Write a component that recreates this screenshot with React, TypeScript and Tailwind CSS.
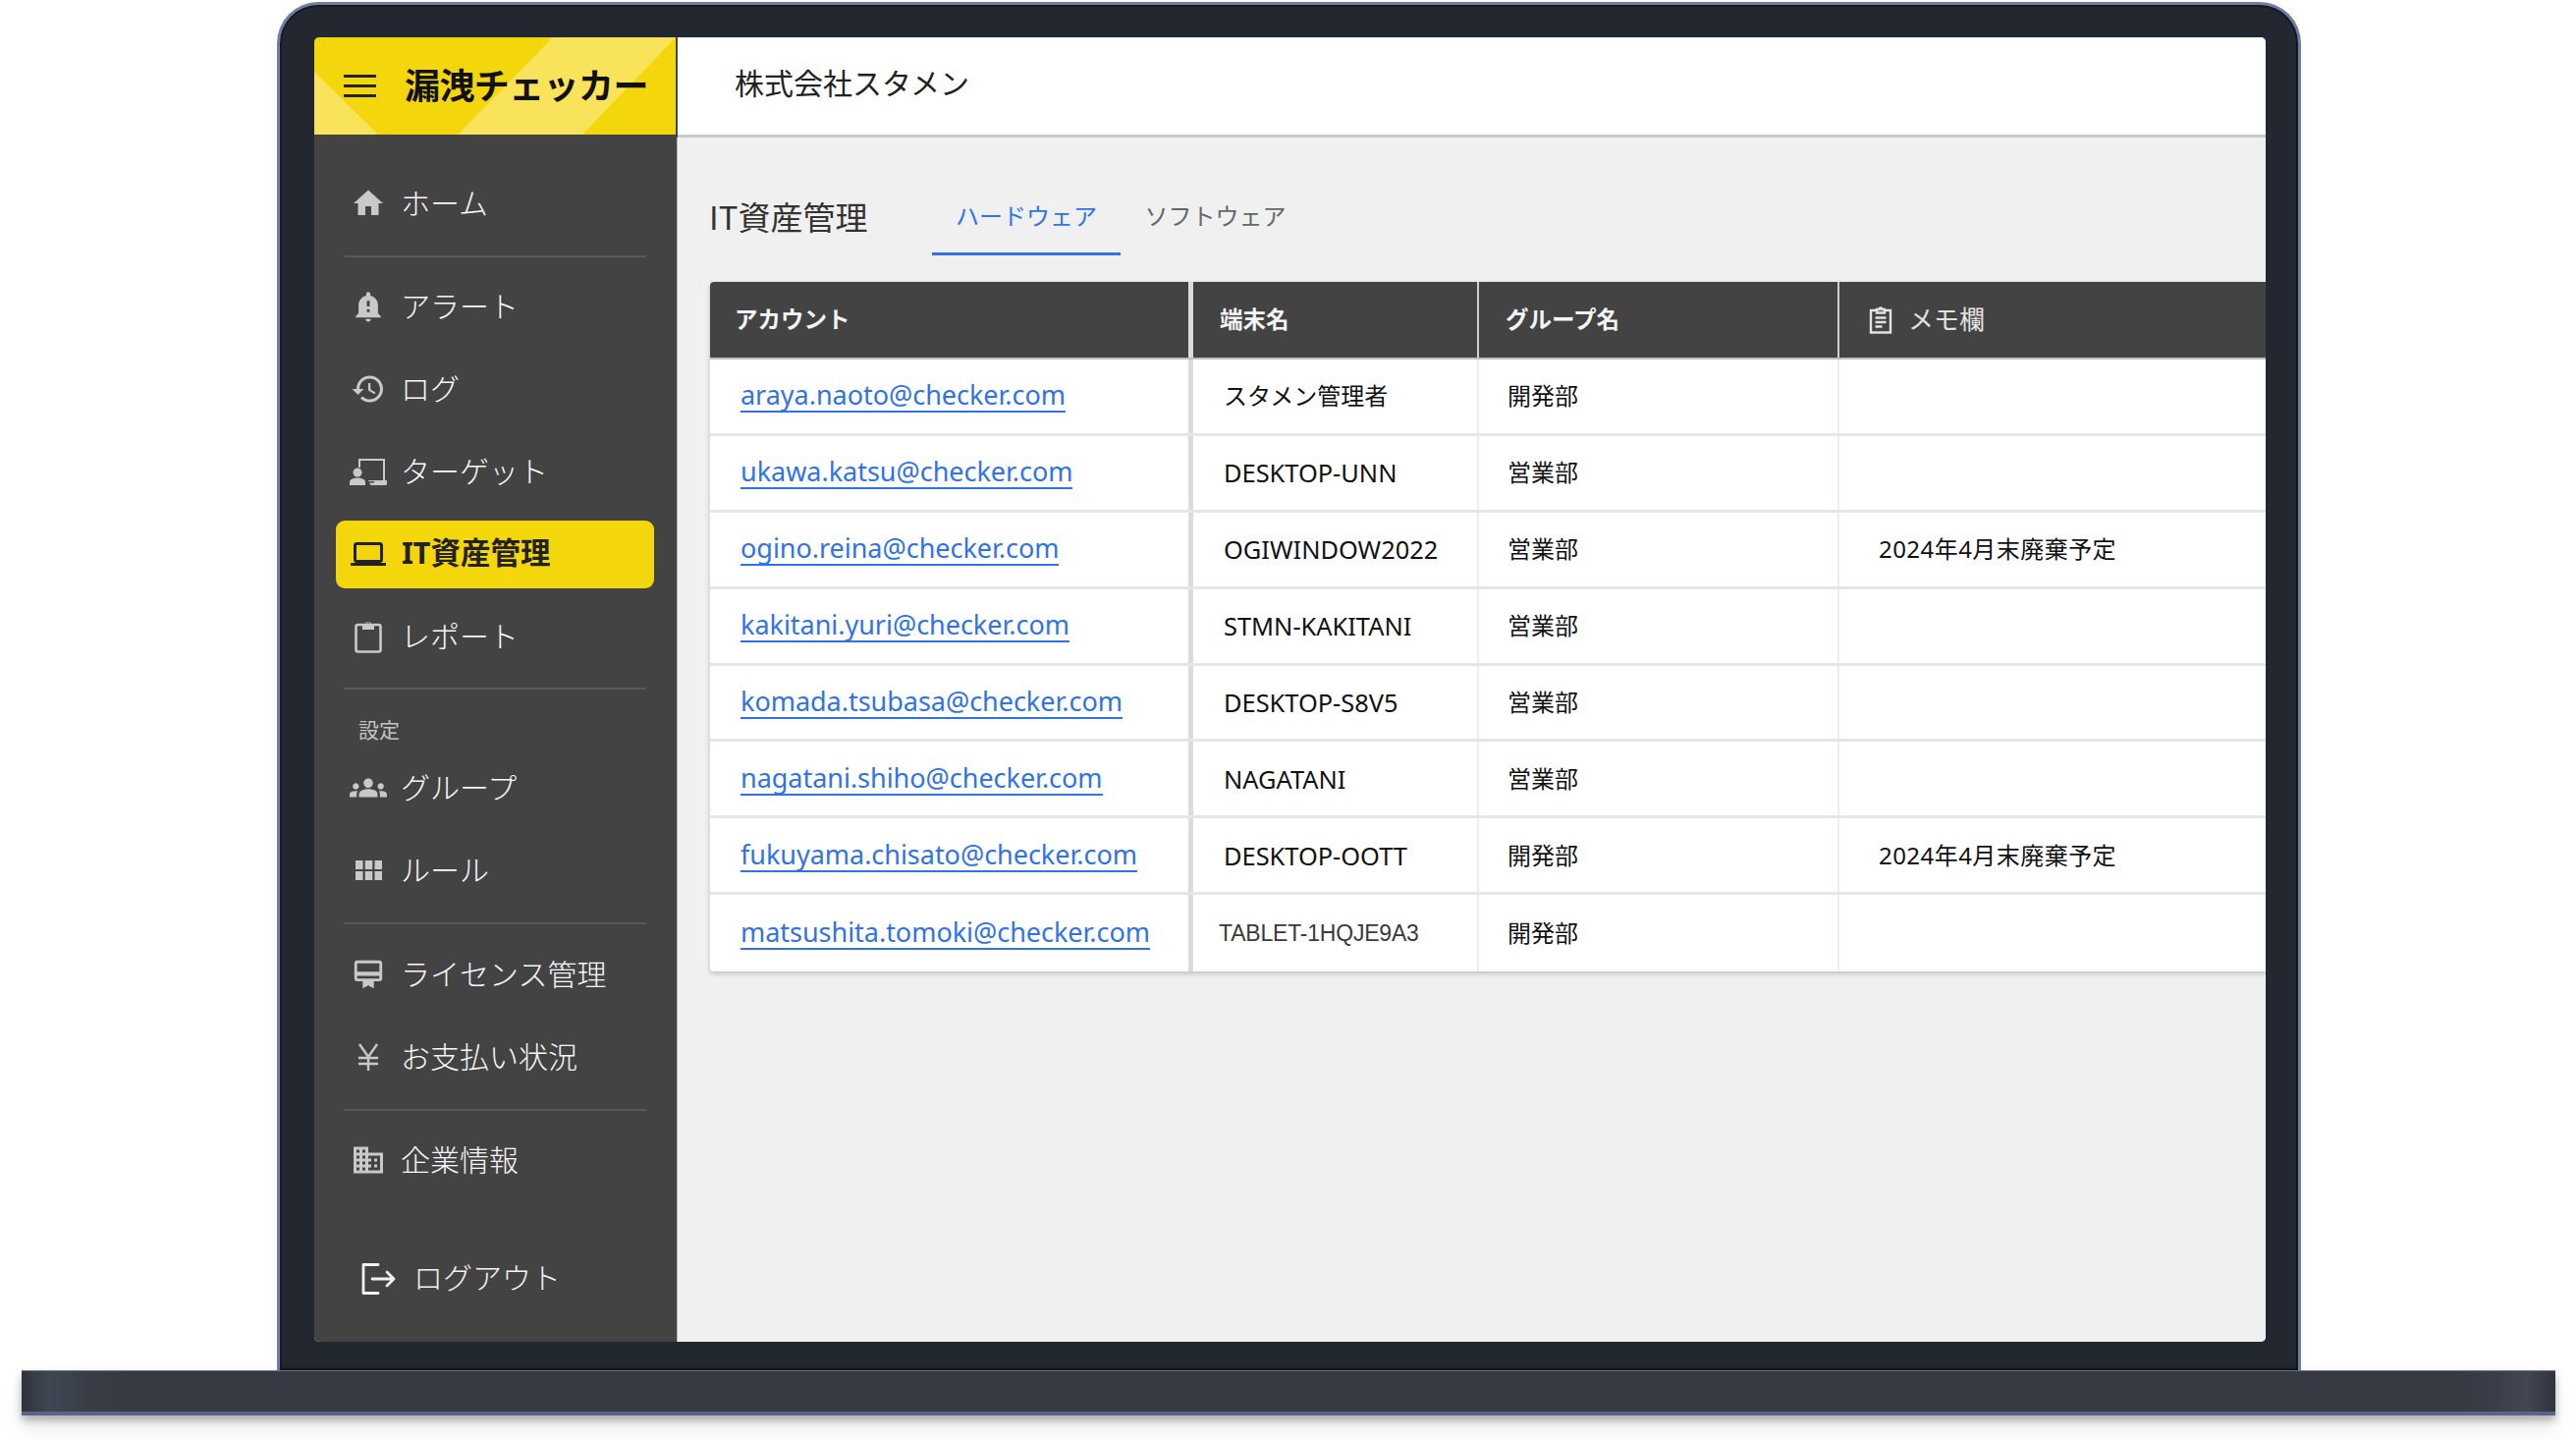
import type { ReactNode } from "react";

const rows = [
  { mail: "araya.naoto@checker.com", host: "スタメン管理者", group: "開発部", memo: "" },
  { mail: "ukawa.katsu@checker.com", host: "DESKTOP-UNN", group: "営業部", memo: "" },
  { mail: "ogino.reina@checker.com", host: "OGIWINDOW2022", group: "営業部", memo: "2024年4月末廃棄予定" },
  { mail: "kakitani.yuri@checker.com", host: "STMN-KAKITANI", group: "営業部", memo: "" },
  { mail: "komada.tsubasa@checker.com", host: "DESKTOP-S8V5", group: "営業部", memo: "" },
  { mail: "nagatani.shiho@checker.com", host: "NAGATANI", group: "営業部", memo: "" },
  { mail: "fukuyama.chisato@checker.com", host: "DESKTOP-OOTT", group: "開発部", memo: "2024年4月末廃棄予定" },
  { mail: "matsushita.tomoki@checker.com", host: "TABLET-1HQJE9A3", group: "開発部", memo: "" },
];

function Mui({ d, size = 36 }: { d: string; size?: number }) {
  return (
    <svg width={size} height={size} viewBox="0 0 24 24" fill="currentColor">
      <path d={d} />
    </svg>
  );
}

const HomeIcon = <Mui d="M10 20v-6h4v6h5v-8h3L12 3 2 12h3v8z" />;
const BellIcon = (
  <Mui
    size={34}
    d="M12 23c1.1 0 1.99-.89 1.99-1.99h-3.98c0 1.1.89 1.99 1.99 1.99zm7-6v-6c0-3.35-2.36-6.15-5.5-6.83V3c0-.83-.67-1.5-1.5-1.5s-1.5.67-1.5 1.5v1.17C7.36 4.85 5 7.65 5 11v6l-2 2v1h18v-1l-2-2zm-6-1h-2v-2h2v2zm0-4h-2V8h2v4z"
  />
);
const HistoryIcon = (
  <Mui d="M13 3c-4.97 0-9 4.03-9 9H1l3.89 3.89.07.14L9 12H6c0-3.87 3.13-7 7-7s7 3.13 7 7-3.13 7-7 7c-1.93 0-3.68-.79-4.94-2.06l-1.42 1.42C8.27 19.99 10.51 21 13 21c4.97 0 9-4.03 9-9s-4.03-9-9-9zm-1 5v5l4.28 2.54.72-1.21-3.5-2.08V8H12z" />
);
const LaptopIcon = (
  <Mui d="M20 18c1.1 0 1.99-.9 1.99-2L22 6c0-1.1-.9-2-2-2H4c-1.1 0-2 .9-2 2v10c0 1.1.9 2 2 2H0v2h24v-2h-4zM4 6h16v10H4V6z" />
);
const GroupsIcon = (
  <Mui
    size={38}
    d="M12 12.75c1.63 0 3.07.39 4.24.9 1.08.48 1.76 1.56 1.76 2.73V18H6v-1.61c0-1.18.68-2.26 1.76-2.73 1.17-.52 2.61-.91 4.24-.91zM4 13c1.1 0 2-.9 2-2s-.9-2-2-2-2 .9-2 2 .9 2 2 2zm1.13 1.1c-.37-.06-.74-.1-1.13-.1-.99 0-1.93.21-2.78.58C.48 14.9 0 15.62 0 16.43V18h4.5v-1.61c0-.83.23-1.61.63-2.29zM20 13c1.1 0 2-.9 2-2s-.9-2-2-2-2 .9-2 2 .9 2 2 2zm4 3.43c0-.81-.48-1.53-1.22-1.85-.85-.37-1.79-.58-2.78-.58-.39 0-.76.04-1.13.1.4.68.63 1.46.63 2.29V18H24v-1.57zM12 6c1.66 0 3 1.34 3 3s-1.34 3-3 3-3-1.34-3-3 1.34-3 3-3z"
  />
);
const MembershipIcon = (
  <Mui
    size={34}
    d="M20 2H4c-1.11 0-2 .89-2 2v11c0 1.11.89 2 2 2h4v5l4-2 4 2v-5h4c1.11 0 2-.89 2-2V4c0-1.11-.89-2-2-2zm0 13H4v-2h16v2zm0-5H4V4h16v6z"
  />
);
const BusinessIcon = (
  <Mui d="M12 7V3H2v18h20V7H12zM6 19H4v-2h2v2zm0-4H4v-2h2v2zm0-4H4V9h2v2zm0-4H4V5h2v2zm4 12H8v-2h2v2zm0-4H8v-2h2v2zm0-4H8V9h2v2zm0-4H8V5h2v2zm10 12h-8v-2h2v-2h-2v-2h2v-2h-2V9h8v10zm-2-8h-2v2h2v-2zm0 4h-2v2h2v-2z" />
);

function ReportIcon() {
  return (
    <svg width="28" height="34" viewBox="0 0 28 34" fill="currentColor">
      <rect x="1.500" y="5" width="25" height="27.500" rx="2" fill="none" stroke="currentColor" strokeWidth="2.600" />
      <path
        fillRule="evenodd"
        d="M8 4h3.200a3 3 0 0 1 5.600 0H20v6H8zM14 2.500a1.300 1.300 0 1 0 0 2.600 1.300 1.300 0 0 0 0-2.600z"
      />
    </svg>
  );
}

function TargetIcon() {
  return (
    <svg width="38" height="30" viewBox="0 0 38 30" fill="currentColor">
      <path d="M9 2h27v22h-2V4H11v7H9z" />
      <path d="M19 24h19v3.500c0 .8-.6 1.500-1.500 1.500H21.500z" />
      <circle cx="8" cy="16" r="4.500" />
      <path d="M0 29v-3c0-3 3.500-4.500 8-4.500s8 1.500 8 4.500v3z" />
      <path d="M18 25h7v1.500h-7z" fill="#434343" />
    </svg>
  );
}

function AppsIcon() {
  return (
    <svg width="27" height="20" viewBox="0 0 27 20" fill="currentColor">
      <path d="M0 0h7.500v9H0zM9.750 0h7.500v9h-7.500zM19.500 0H27v9h-7.500zM0 11h7.500v9H0zM9.750 11h7.500v9h-7.500zM19.500 11H27v9h-7.500z" />
    </svg>
  );
}

function YenIcon() {
  return (
    <svg width="22" height="28" viewBox="0 0 22 28" fill="none" stroke="currentColor" strokeWidth="2.400">
      <path d="M2 1l9 13 9-13M11 14v14M1 15h20M1 21h20" />
    </svg>
  );
}

function LogoutIcon() {
  return (
    <svg width="36" height="32" viewBox="0 0 36 32" fill="none" stroke="currentColor" strokeWidth="2.800" strokeLinejoin="round" strokeLinecap="round">
      <path d="M17 1.500H2v29h15M11 16h22M26 9l7 7-7 7" />
    </svg>
  );
}

function MemoIcon() {
  return (
    <svg width="24" height="28" viewBox="0 0 24 28" fill="none" stroke="currentColor" strokeWidth="2.400">
      <path d="M8 4H2v22.500h20V4h-6" />
      <path d="M8 6.500V3h2.500a1.500 1.500 0 0 1 3 0H16v3.500zM6.500 11.500h11M6.500 16h11M6.500 20.500h7" />
    </svg>
  );
}

function NavItem({ icon, label, active }: { icon: ReactNode; label: string; active?: boolean }) {
  return (
    <li className="flex h-[84px] items-center pl-[22px] pr-[23px]">
      <a
        className={
          active
            ? "flex h-[69px] w-full items-center rounded-[9px] bg-[#f4d60c] text-[30.5px] font-bold text-[#222222]"
            : "flex h-[69px] w-full items-center text-[30px] font-light text-[#f7f7f7]"
        }
      >
        <span
          className={
            active
              ? "ml-[14px] mr-[15px] flex w-[38px] justify-center text-[#222222]"
              : "ml-[14px] mr-[14px] flex w-[38px] justify-center text-[#c9c9c9]"
          }
        >
          {icon}
        </span>
        <span className={active ? "mb-[3px]" : "mb-[1px]"}>{label}</span>
      </a>
    </li>
  );
}

function Divider({ className }: { className: string }) {
  return <div className={"ml-[30px] mr-[31px] h-[2px] bg-[#585858] " + className} />;
}

function Sidebar() {
  return (
    <aside className="flex w-[370px] shrink-0 flex-col border-r border-[#b5b5b5] bg-[#434343] pt-[25px]">
      <ul>
        <NavItem icon={HomeIcon} label="ホーム" />
      </ul>
      <Divider className="mt-[11px]" />
      <ul className="mt-[8px]">
        <NavItem icon={BellIcon} label="アラート" />
        <NavItem icon={HistoryIcon} label="ログ" />
        <NavItem icon={<TargetIcon />} label="ターゲット" />
        <NavItem icon={LaptopIcon} label="IT資産管理" active />
        <NavItem icon={<ReportIcon />} label="レポート" />
      </ul>
      <Divider className="mt-[10px]" />
      <div className="ml-[45px] mt-[26px] h-[30px] text-[21px] leading-[30px] text-[#c4c4c4]">設定</div>
      <ul className="mt-[2px]">
        <NavItem icon={GroupsIcon} label="グループ" />
        <NavItem icon={<AppsIcon />} label="ルール" />
      </ul>
      <Divider className="mt-[11px]" />
      <ul className="mt-[9px]">
        <NavItem icon={MembershipIcon} label="ライセンス管理" />
        <NavItem icon={<YenIcon />} label="お支払い状況" />
      </ul>
      <Divider className="mt-[11px]" />
      <ul className="mt-[8px]">
        <NavItem icon={BusinessIcon} label="企業情報" />
      </ul>
      <div className="ml-[48px] mt-[55px] flex items-center gap-[17px] text-[30px] font-light text-[#f2f2f2]">
        <LogoutIcon />
        <span className="mb-[3px]">ログアウト</span>
      </div>
    </aside>
  );
}

function Logo() {
  return (
    <div className="h-[102px] w-[370px] shrink-0 bg-[#434343]">
      <div className="relative flex h-[99px] w-[368px] items-center overflow-hidden bg-[#f4d60c] pl-[30px]">
        <svg className="absolute left-0 top-0" width="368" height="99" viewBox="0 0 368 99" fill="#f9e35a">
          <path d="M0 35l65 64H0zM243 0h125l-95 99H146z" />
        </svg>
        <span className="relative mr-[29px] flex w-[33px] flex-col gap-[7px]">
          <i className="block h-[3px] bg-[#222222]" />
          <i className="block h-[3px] bg-[#222222]" />
          <i className="block h-[3px] bg-[#222222]" />
        </span>
        <span className="relative text-[36px] font-bold tracking-[-0.6px] text-[#111111]">漏洩チェッカー</span>
      </div>
    </div>
  );
}

const gridCols = "grid grid-cols-[492px_291px_367px_1fr]";

function AssetTable() {
  return (
    <div className="mt-[27px] overflow-hidden rounded-l-[4px] bg-white shadow-[0_2px_5px_rgba(0,0,0,0.22)]">
      <div className={gridCols + " h-[79px] border-b-[2px] border-[#bdbdbd] bg-[#434343] text-[23.5px] font-bold text-[#f4f4f4]"}>
        <div className="flex items-center border-r-[5px] border-[#dcdcdc] pl-[25px]">アカウント</div>
        <div className="flex items-center border-r-2 border-[#cfcfcf] pl-[27px]">端末名</div>
        <div className="flex items-center border-r-2 border-[#cfcfcf] pl-[27px]">グループ名</div>
        <div className="flex items-center gap-[16px] pl-[30px] text-[26px] font-normal text-[#e2e2e2]">
          <MemoIcon />
          メモ欄
        </div>
      </div>
      {rows.map((r, i) => (
        <div
          key={r.mail}
          className={
            gridCols +
            " h-[77.9px] text-[24px] text-[#111111] " +
            (i < rows.length - 1 ? "border-b-[3px] border-[#e6e6e6]" : "")
          }
        >
          <div className="flex items-center border-r-[5px] border-[#dcdcdc] pl-[31px]">
            <a className="border-b-2 border-[#2f73e6] text-[27px] leading-[32px] tracking-[-0.03px] text-[#2f73e6]">{r.mail}</a>
          </div>
          {r.host.startsWith("TABLET") ? (
            <div className="flex items-center border-r-2 border-[#ececec] pl-[26px] font-['Liberation_Sans',sans-serif] text-[23px] tracking-[-0.2px] text-[#3a3a3a]">
              {r.host}
            </div>
          ) : r.host.startsWith("スタメン") ? (
            <div className="flex items-center border-r-2 border-[#ececec] pl-[31px]">{r.host}</div>
          ) : (
            <div className="flex items-center border-r-2 border-[#ececec] pl-[31px] text-[25.4px]">{r.host}</div>
          )}
          <div className="flex items-center border-r-2 border-[#ececec] pl-[29px]">{r.group}</div>
          <div className="flex items-center pl-[40px] tracking-[0.45px]">{r.memo}</div>
        </div>
      ))}
    </div>
  );
}

function Main() {
  return (
    <main className="min-w-0 flex-1 bg-[#f0f0f0] pl-[33px]">
      <div className="mt-[60px] flex h-[60px] items-start">
        <h1 className="-ml-[1px] w-[227px] text-[33px] font-normal leading-[40px] text-[#333333] [font-family:'Noto_Sans_CJK_JP',sans-serif]">
          IT資産管理
        </h1>
        <div className="flex h-[60px] w-[192px] justify-center border-b-[3px] border-[#2f73e6] pt-[2px] text-[24px] leading-[36px] text-[#2f73e6]">
          ハードウェア
        </div>
        <div className="flex h-[60px] w-[193px] justify-center pt-[2px] text-[24px] leading-[36px] text-[#666666]">
          ソフトウェア
        </div>
      </div>
      <AssetTable />
    </main>
  );
}

export default function App() {
  return (
    <div className="relative h-[1466px] w-[2623px] overflow-hidden bg-white pt-[2px] [font-family:'Noto_Sans','Noto_Sans_CJK_JP',sans-serif]">
      <div className="ml-[282px] box-border h-[1393px] w-[2061px] rounded-t-[42px] border-[3px] border-b-0 border-[#6f7ea8] bg-[#23272f] pb-[29px] pl-[35px] pr-[33px] pt-[33px] shadow-[inset_0_0_0_2px_#16191e]">
        <div className="flex h-full flex-col overflow-hidden rounded-[5px] bg-[#f0f0f0]">
          <header className="flex shrink-0">
            <Logo />
            <div className="flex h-[102px] flex-1 items-start border-b-[3px] border-[#c9c9c9] bg-white pl-[58px] pt-[26px] text-[30px] leading-[42px] text-[#222222]">
              株式会社スタメン
            </div>
          </header>
          <div className="flex min-h-0 flex-1">
            <Sidebar />
            <Main />
          </div>
        </div>
      </div>
      <div className="ml-[22px] box-border h-[46px] w-[2580px] border-b-[4px] border-t border-b-[#5a6488] border-t-[#6b6f7b] bg-[linear-gradient(90deg,#2f333a_0px,#404652_28px,#383d46_70px,#353a43_110px,#353a43_calc(100%-95px),#3a3e48_calc(100%-60px),#424753_calc(100%-30px),#2f333a_100%)] shadow-[0_5px_8px_rgba(0,0,0,0.28),0_14px_24px_rgba(0,0,0,0.08)]" />
    </div>
  );
}
